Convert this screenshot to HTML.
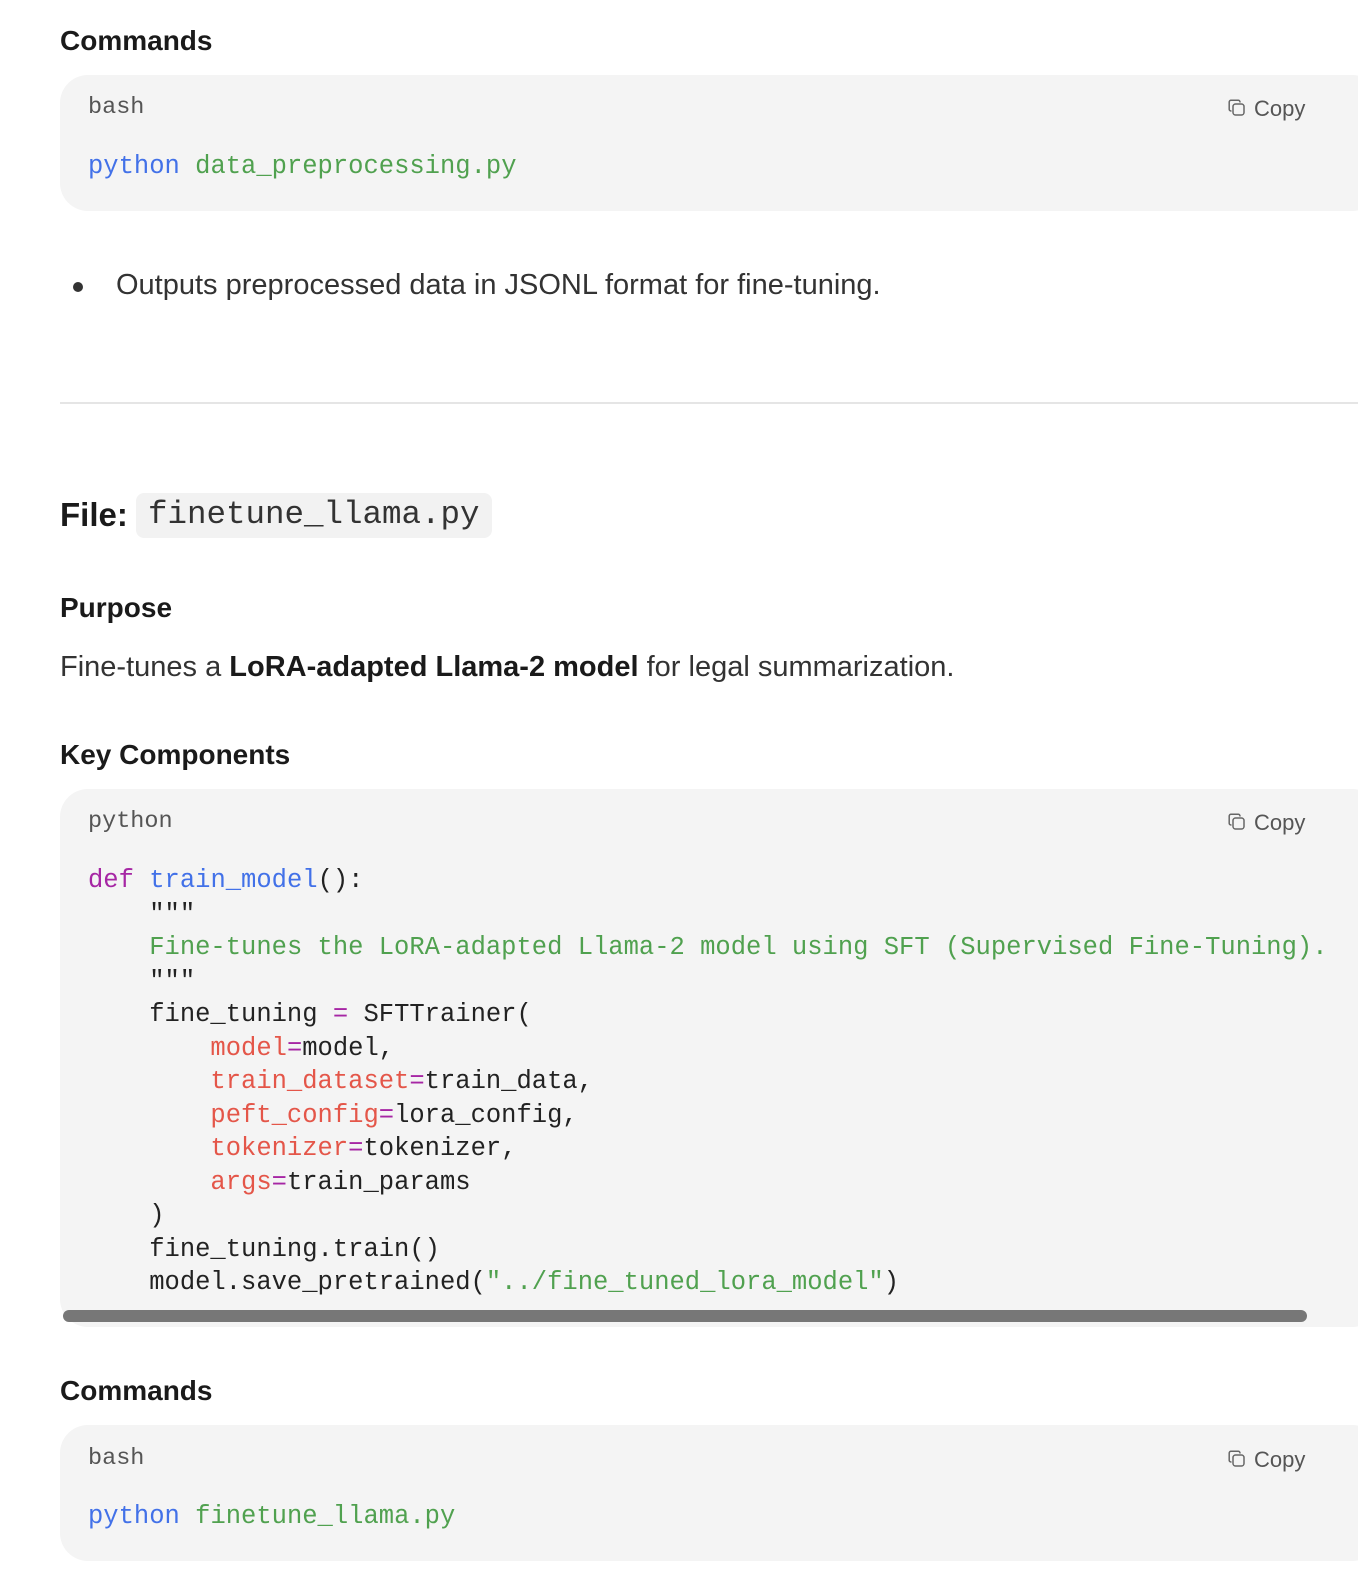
<!DOCTYPE html>
<html><head><meta charset="utf-8"><style>
body{margin:0;background:#fff;width:1358px;height:1594px;overflow:hidden;position:relative;font-family:"Liberation Sans",Arial,sans-serif;color:#1f1f1f}
.a{position:absolute;white-space:pre}
.h{font-weight:bold;font-size:28px;color:#1a1a1a}
.t{font-size:29px;color:#333}
.blk{position:absolute;left:60px;width:1320px;background:#f4f4f4;border-radius:28px}
.m{font-family:"Liberation Mono",monospace}
.lab{font-size:23.5px;color:#555}
.copy{font-size:22px;color:#555}
.code{font-size:25.5px;line-height:33.5px;color:#222}
.kw{color:#a626a4}.fn{color:#4271e8}.st{color:#50a14f}.pa{color:#e45649}
</style></head><body>
<div class="a h" style="left:60px;top:25px">Commands</div>
<div class="blk" style="top:75px;height:136px"></div>
<div class="a m lab" style="left:88px;top:94px">bash</div>
<svg class="a" style="left:1228px;top:99px" width="18" height="18" viewBox="0 0 18 18" fill="none" stroke="#666" stroke-width="1.5"><rect x="5" y="5" width="11" height="11" rx="2.5"/><path d="M12 3.5V3a1.8 1.8 0 0 0-1.8-1.8H3A1.8 1.8 0 0 0 1.2 3v7.2A1.8 1.8 0 0 0 3 12h.5"/></svg>
<div class="a copy" style="left:1254px;top:96px">Copy</div>
<div class="a m code" style="left:88px;top:150px"><span class="fn">python</span> <span class="st">data_preprocessing.py</span></div>
<div class="a" style="left:73px;top:282px;width:10px;height:10px;border-radius:50%;background:#333"></div>
<div class="a t" style="left:116px;top:269px">Outputs preprocessed data in JSONL format for fine-tuning.</div>
<div class="a" style="left:60px;top:402px;width:1298px;height:2px;background:#e5e5e5"></div>
<div class="a" style="left:60px;top:496px;font-size:33px;font-weight:bold;color:#1a1a1a">File:</div>
<div class="a" style="left:136px;top:493px;width:356px;height:45px;background:#f2f2f2;border-radius:8px"></div>
<div class="a m" style="left:148px;top:496px;font-size:32.5px;color:#333">finetune_llama.py</div>
<div class="a h" style="left:60px;top:592px">Purpose</div>
<div class="a t" style="left:60px;top:651px">Fine-tunes a <b style="color:#1a1a1a">LoRA-adapted Llama-2 model</b> for legal summarization.</div>
<div class="a h" style="left:60px;top:739px">Key Components</div>
<div class="blk" style="top:789px;height:538px"></div>
<div class="a m lab" style="left:88px;top:808px">python</div>
<svg class="a" style="left:1228px;top:813px" width="18" height="18" viewBox="0 0 18 18" fill="none" stroke="#666" stroke-width="1.5"><rect x="5" y="5" width="11" height="11" rx="2.5"/><path d="M12 3.5V3a1.8 1.8 0 0 0-1.8-1.8H3A1.8 1.8 0 0 0 1.2 3v7.2A1.8 1.8 0 0 0 3 12h.5"/></svg>
<div class="a copy" style="left:1254px;top:810px">Copy</div>
<div class="a m code" style="left:88px;top:864px"><span class="kw">def</span> <span class="fn">train_model</span>():
    """
    <span class="st">Fine-tunes the LoRA-adapted Llama-2 model using SFT (Supervised Fine-Tuning).</span>
    """
    fine_tuning <span class="kw">=</span> SFTTrainer(
        <span class="pa">model</span><span class="kw">=</span>model,
        <span class="pa">train_dataset</span><span class="kw">=</span>train_data,
        <span class="pa">peft_config</span><span class="kw">=</span>lora_config,
        <span class="pa">tokenizer</span><span class="kw">=</span>tokenizer,
        <span class="pa">args</span><span class="kw">=</span>train_params
    )
    fine_tuning.train()
    model.save_pretrained(<span class="st">"../fine_tuned_lora_model"</span>)</div>
<div class="a" style="left:63px;top:1310px;width:1244px;height:12px;border-radius:6px;background:#777"></div>
<div class="a h" style="left:60px;top:1375px">Commands</div>
<div class="blk" style="top:1425px;height:136px"></div>
<div class="a m lab" style="left:88px;top:1445px">bash</div>
<svg class="a" style="left:1228px;top:1450px" width="18" height="18" viewBox="0 0 18 18" fill="none" stroke="#666" stroke-width="1.5"><rect x="5" y="5" width="11" height="11" rx="2.5"/><path d="M12 3.5V3a1.8 1.8 0 0 0-1.8-1.8H3A1.8 1.8 0 0 0 1.2 3v7.2A1.8 1.8 0 0 0 3 12h.5"/></svg>
<div class="a copy" style="left:1254px;top:1447px">Copy</div>
<div class="a m code" style="left:88px;top:1500px"><span class="fn">python</span> <span class="st">finetune_llama.py</span></div>
</body></html>
